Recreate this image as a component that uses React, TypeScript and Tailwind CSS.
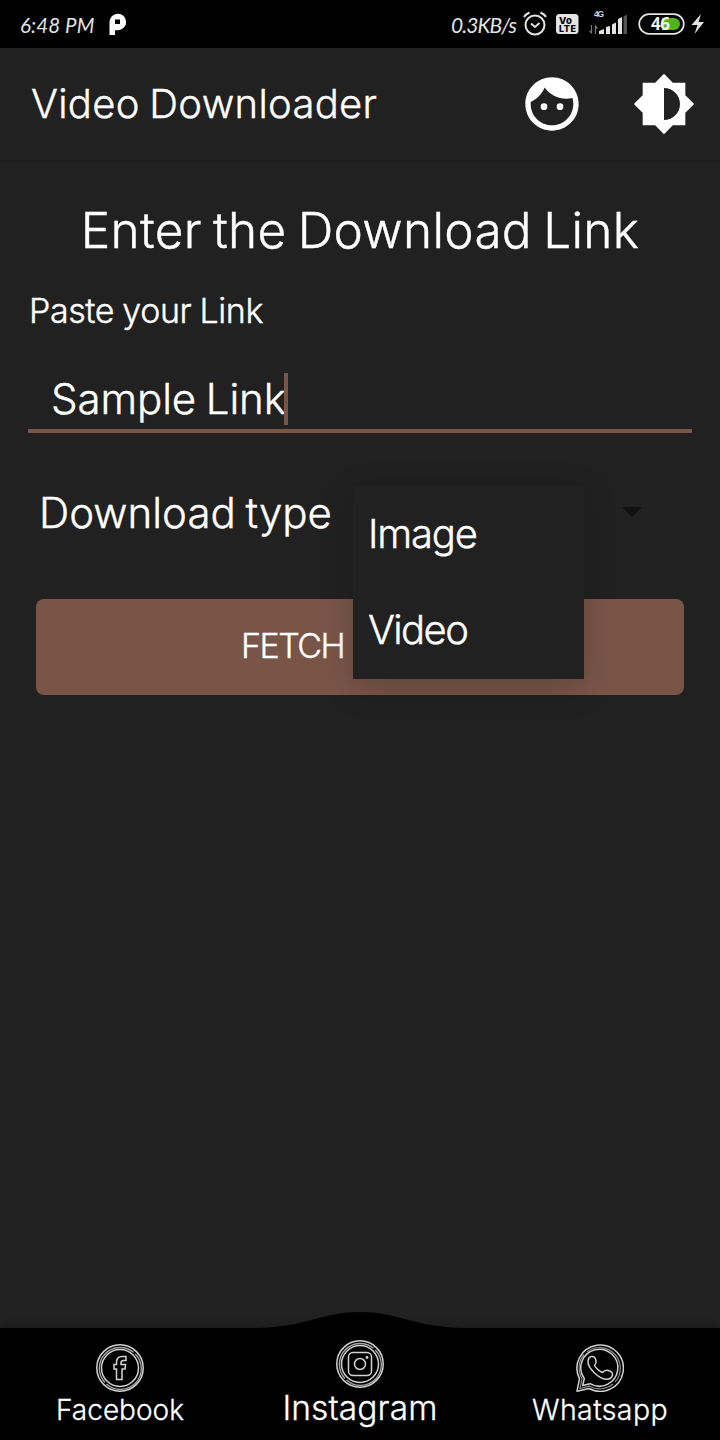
import type { ReactNode } from "react";

function RingIcon({ children }: { children: ReactNode }) {
  return (
    <svg width="48" height="48" viewBox="0 0 48 48" fill="none" stroke="#d2d2d2" strokeWidth="1.5">
      <circle cx="24" cy="24" r="23.200" />
      <path d="M37.500 8.300A20.800 20.800 0 0 0 9 38.500M39.200 9.900A20.800 20.800 0 0 1 10.500 40" strokeWidth="1.400" stroke="#a5a5a5" />
      <circle cx="24" cy="24" r="18.500" />
      {children}
    </svg>
  );
}

function StatusBar() {
  return (
    <div className="flex h-12 shrink-0 items-center bg-black text-[#e4e4e4]">
      <span className="mt-0.5 ml-5 w-[75px] font-['Lato'] text-[20.5px] font-normal italic tracking-[0.1px] whitespace-nowrap">6:48 PM</span>
      <svg className="ml-[14px] shrink-0" width="18" height="22" viewBox="0 0 18 22">
        <path fill="#fff" fillRule="evenodd" d="M0.500 22V9a8.300 8.300 0 1 1 9 8.200H6V22zM6 6.500v4.500h5V6.500z" />
      </svg>
      <div className="flex-1" />
      <span className="mt-0.5 mr-[7px] font-['Lato'] text-[21px] font-normal italic tracking-[-0.9px] whitespace-nowrap">0.3KB/s</span>
      <svg width="24" height="26" viewBox="0 0 24 26" fill="none" stroke="#e4e4e4" strokeWidth="2">
        <circle cx="12" cy="14" r="9.5" />
        <path d="M8 12.500l4 3.500 4.500-4M1 6q2-3 5.500-4.500M23 6q-2-3-5.500-4.500" />
      </svg>
      <svg className="ml-[9px]" width="23" height="20" viewBox="0 0 23 20">
        <rect width="22.500" height="20" rx="3.500" fill="#e4e4e4" />
        <text x="3" y="9.500" fontFamily="Inter" fontWeight="800" fontSize="9.500" textLength="13">Vo</text>
        <text x="3" y="18" fontFamily="Inter" fontWeight="800" fontSize="9" textLength="17">LTE</text>
      </svg>
      <svg className="-mt-1 ml-[10px]" width="40" height="28" viewBox="0 0 40 28">
        <text x="5" y="9" fontFamily="Liberation Sans" fontWeight="700" fontSize="8.500" fill="#d4d4d4" textLength="10">4G</text>
        <path d="M2.500 17v8M.500 22.500l2 3M6.500 26v-8l2 3" stroke="#777" strokeWidth="1.200" fill="none" />
        <path fill="#e4e4e4" d="M10 26v-3l5-2v5zM17 26v-7l4-1v8zM23 26v-9.500l4-2V26zM29 26V11l4-2v17z" />
        <path fill="#555" d="M34.500 26V8.500l3.500-2V26z" />
      </svg>
      <svg className="ml-[9px]" width="47" height="22" viewBox="0 0 47 22">
        <rect x="1.200" y="1.200" width="44.600" height="19.600" rx="9.800" fill="none" stroke="#e4e4e4" strokeWidth="1.700" />
        <path d="M24 5h12a6 6 0 0 1 0 12H24z" fill="#52b418" />
        <text x="13" y="17" fontFamily="Open Sans" fontWeight="700" fontSize="17" fill="#f4f4f4" textLength="19">46</text>
      </svg>
      <svg className="mr-[15px] ml-1.5" width="14" height="20" viewBox="0 0 14 20">
        <path fill="#e4e4e4" d="M10 0L0.500 11h6L3.500 20 13 8H7.500z" />
      </svg>
    </div>
  );
}

export default function App() {
  return (
    <div className="flex h-[1440px] w-[720px] flex-col overflow-hidden bg-[#212121] font-['Inter',sans-serif] font-light text-white">
      <StatusBar />
      <header className="flex h-28 shrink-0 items-center pl-[31px] shadow-[0_1px_2px_rgba(0,0,0,0.1)] [-webkit-text-stroke:0.4px_white]">
        <h1 className="text-[40px] font-light tracking-[0.3px] [word-spacing:-2px] whitespace-nowrap">Video Downloader</h1>
        <div className="flex-1" />
        <svg width="64" height="64" viewBox="0 0 24 24" fill="#fff">
          <path d="M9 11.750A1.250 1.250 0 1 0 9 14.250a1.250 1.250 0 0 0 0-2.500zm6 0a1.250 1.250 0 1 0 0 2.500 1.250 1.250 0 0 0 0-2.500zM12 2C6.480 2 2 6.480 2 12s4.480 10 10 10 10-4.480 10-10S17.520 2 12 2zm0 18c-4.410 0-8-3.590-8-8 0-.290.020-.580.050-.860 2.360-1.050 4.230-2.980 5.210-5.370C11.070 8.330 14.050 10 17.420 10c.780 0 1.530-.090 2.250-.260.210.710.330 1.470.330 2.260 0 4.410-3.590 8-8 8z" />
        </svg>
        <svg className="mr-6 ml-12" width="64" height="64" viewBox="0 0 24 24" fill="#fff">
          <path d="M20 15.310L23.310 12 20 8.690V4h-4.690L12 .69 8.690 4H4v4.690L.69 12 4 15.310V20h4.690L12 23.310 15.310 20H20v-4.690zM12 18V6c3.310 0 6 2.690 6 6s-2.690 6-6 6z" />
        </svg>
      </header>
      <main className="flex flex-1 flex-col [-webkit-text-stroke:0.4px_white]">
        <h2 className="mt-10 mb-px self-center text-[49.5px] leading-[60px] font-light tracking-[0.3px] [word-spacing:-3px] whitespace-nowrap">Enter the Download Link</h2>
        <label className="mt-[30px] ml-[29px] self-start text-[34px] leading-[40px] tracking-[-0.4px] [word-spacing:-1px] whitespace-nowrap">Paste your Link</label>
        <div className="mx-7 mt-[42px] flex h-[60px] items-start border-b-4 border-[#795548] pl-[23px]">
          <span className="w-[233px] text-[42px] leading-[52px] tracking-[-0.1px] [word-spacing:-2px] whitespace-nowrap">Sample Link</span>
          <span className="h-[52px] w-1 bg-[#795548]" />
        </div>
        <div className="relative mt-[50px] flex h-[60px] items-center pl-[39px]">
          <span className="-mt-0.5 text-[42px] [word-spacing:-2px] whitespace-nowrap">Download type</span>
          <svg className="-mt-0.5 mr-[78px] ml-auto" width="20" height="10" viewBox="0 0 20 10"><path d="M0 0h20L10 10z" fill="#111" /></svg>
          <ul className="absolute top-[3px] left-[353px] z-10 h-[193px] w-[231px] bg-[#212121] pl-[15px] text-[40px] shadow-[0_8px_32px_rgba(0,0,0,0.2)]">
            <li className="flex h-24 items-center tracking-[-1.2px]">Image</li>
            <li className="flex h-24 items-center tracking-[-1.6px]">Video</li>
          </ul>
        </div>
        <button className="mx-9 mt-14 flex h-24 items-center rounded-lg bg-[#795548] pb-1 pl-[205px] text-[34px] tracking-[-1.5px]">FETCH</button>
      </main>
      <nav className="relative grid h-28 shrink-0 grid-cols-3 bg-black shadow-[0_-2px_8px_rgba(0,0,0,0.2)] [-webkit-text-stroke:0.3px_white]">
        <svg className="absolute -top-4 left-[260px]" width="200" height="17" viewBox="0 0 200 17"><path d="M0 17V16C48 14 64 0 100 0s52 14 100 16v1z" /></svg>
        <div className="flex flex-col items-center pt-4">
          <RingIcon><path d="M20.500 35.500V25h-2.500v-4.500h2.500v-2q0-6 5.500-6h4v4h-2.500q-2.500 0-2.500 2.500v1.500h4.500l-.5 4.500H26v10.500z" /></RingIcon>
          <span className="text-[28px] leading-9 whitespace-nowrap">Facebook</span>
        </div>
        <div className="relative flex flex-col items-center pt-3">
          <RingIcon><rect x="12.500" y="12.500" width="23" height="23" rx="4.500" /><circle cx="24" cy="24" r="5.500" /><circle cx="31" cy="17.500" r=".7" /></RingIcon>
          <span className="text-[33.500px] leading-10 tracking-[0.1px] whitespace-nowrap">Instagram</span>
        </div>
        <div className="flex flex-col items-center pt-4">
          <svg width="48" height="48" viewBox="0 0 48 48" fill="none" stroke="#d2d2d2" strokeWidth="1.500" strokeLinejoin="round">
            <path d="M1 47.200l2.500-12.500A23.200 23.200 0 1 1 13 44.500z" />
            <path d="M8 10.500A20.800 20.800 0 0 0 6 34.500L4 44.500l9.500-2.300A20.800 20.800 0 0 0 37 40M11 7.700A20.800 20.800 0 0 1 39 38.200" stroke="#8c8c8c" strokeWidth="1.200" />
            <path d="M6.700 41.500l1.600-7A18.500 18.500 0 1 1 14 39.700z" />
            <path d="M12 18Q12 12.500 16 12.500Q19.500 12.500 20 17Q20.500 19.500 18.500 21.500Q21 26 26.500 28.500Q29 25.500 32.500 26.500Q37 28 36.500 31Q35.500 35.500 30 35.300Q25 35 18.500 29Q12 22.500 12 18Z" />
          </svg>
          <span className="text-[28.500px] leading-9 tracking-[0.4px] whitespace-nowrap">Whatsapp</span>
        </div>
      </nav>
    </div>
  );
}
